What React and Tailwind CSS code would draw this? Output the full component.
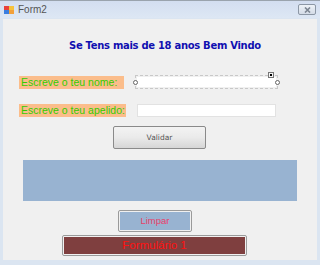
import React from 'react';

function Handle({ className }) {
  return <span className={`absolute w-[5px] h-[5px] rounded-full border border-[#666] bg-white ${className}`} />;
}

export default function App() {
  return (
    <div className="w-[320px] h-[265px] bg-[#dbe5f1] border-t border-[#9aa3ad] flex flex-col overflow-hidden" style={{ fontFamily: '"Liberation Sans", Arial, sans-serif' }}>
      {/* title bar */}
      <div className="h-[17px] flex items-center pl-[4px] pr-[4px] bg-gradient-to-b from-[#d3def0] to-[#dde7f4]">
        <svg width="10" height="10" viewBox="0 0 10 10" className="mr-[4px]">
          <rect x="0" y="1" width="5" height="4" fill="#e8403a" />
          <rect x="5" y="1" width="5" height="4" fill="#f6c23a" />
          <rect x="0" y="5" width="5" height="4" fill="#3a7ee0" />
          <rect x="5" y="5" width="5" height="4" fill="#f2a03a" />
        </svg>
        <span className="text-[10px] text-[#555] leading-none">Form2</span>
        <div className="ml-auto w-[18px] h-[11px] border border-[#8c97a5] rounded-[2px] bg-gradient-to-b from-[#eef2f7] to-[#d4dce7] flex items-center justify-center">
          <svg width="7" height="6" viewBox="0 0 7 6">
            <path d="M1 0.5 L6 5.5 M6 0.5 L1 5.5" stroke="#7c8591" strokeWidth="1.6" />
          </svg>
        </div>
      </div>
      {/* client area */}
      <div className="mx-[3px] h-[241px] mt-[1px] bg-[#f0f0f0] flex flex-col relative">
        <div className="mt-[22px] pl-[66px] h-[10px] flex items-center">
          <span className="text-[10px] font-black text-[#1010b0] leading-none tracking-[-0.3px]" style={{ fontFamily: '"DejaVu Sans", sans-serif' }}>Se Tens mais de 18 anos Bem Vindo</span>
        </div>
        <div className="flex items-center mt-[24px] h-[14px]">
          <div className="w-[132px] pl-[16px]">
            <span className="block w-[105px] h-[13px] px-[2px] bg-[#fbbd8b] text-[#33cc00] text-[10.5px] leading-[13px] whitespace-nowrap">Escreve o teu nome:</span>
          </div>
          <div className="w-[143px] h-[14px] border border-dashed border-[#c8c8c8] relative">
            <div className="absolute inset-[1px] bg-white" />
            <Handle className="left-[-3px] top-[4px]" />
            <Handle className="right-[-3px] top-[4px]" />
            <span className="absolute right-[3px] top-[-4px] w-[6px] h-[6px] border border-[#777] bg-[#f4f4f4] flex items-center justify-center">
              <span className="w-[2px] h-[2px] bg-black" />
            </span>
          </div>
        </div>
        <div className="flex items-center mt-[14px] h-[14px]">
          <div className="w-[134px] pl-[16px]">
            <span className="block w-[107px] h-[13px] px-[2px] bg-[#fbbd8b] text-[#33cc00] text-[10.5px] leading-[13px] whitespace-nowrap">Escreve o teu apelido:</span>
          </div>
          <div className="w-[139px] h-[13px] bg-white border border-[#e2e2e2]" />
        </div>
        <div className="mt-[9px] ml-[110px] w-[93px] h-[23px] border border-[#8a8a8a] rounded-[2px] bg-gradient-to-b from-[#f3f3f3] via-[#eaeaea] to-[#d6d6d6] flex items-center justify-center">
          <span className="text-[7.5px] text-[#555]" style={{ fontFamily: '"DejaVu Sans", sans-serif' }}>Validar</span>
        </div>
        <div className="mt-[11px] ml-[20px] w-[274px] h-[41px] bg-[#98b3d1]" />
        <div className="mt-[9px] ml-[115px] w-[74px] h-[22px] border border-[#9a9a9a] rounded-[2px] p-[1px] bg-[#f0f0f0]">
          <div className="w-full h-full bg-[#98b3d1] flex items-center justify-center">
            <span className="text-[9.5px] text-[#e8406a]">Limpar</span>
          </div>
        </div>
        <div className="mt-[3px] ml-[59px] w-[185px] h-[21px] border border-[#9a9a9a] rounded-[2px] p-[1px] bg-[#f0f0f0]">
          <div className="w-full h-full bg-[#7f3f3f] flex items-center justify-center">
            <span className="text-[11.5px] text-[#ff1010]">Formulário 1</span>
          </div>
        </div>
      </div>
    </div>
  );
}
